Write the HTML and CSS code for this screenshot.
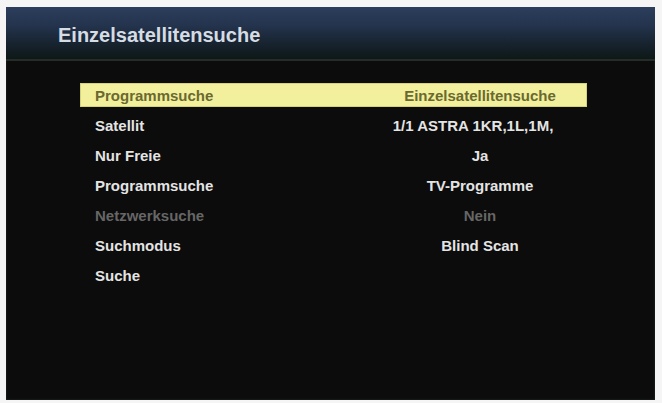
FILE: index.html
```html
<!DOCTYPE html>
<html lang="de">
<head>
<meta charset="utf-8">
<title>Einzelsatellitensuche</title>
<link rel="stylesheet" href="styles.css">
</head>
<body>
<div class="screen">
  <div class="header">
    <h1 class="title">Einzelsatellitensuche</h1>
  </div>
  <div class="menu">
    <div class="row selected"><span class="label">Programmsuche</span><span class="value">Einzelsatellitensuche</span></div>
    <div class="row"><span class="label">Satellit</span><span class="value shift">1/1 ASTRA 1KR,1L,1M,</span></div>
    <div class="row"><span class="label">Nur Freie</span><span class="value">Ja</span></div>
    <div class="row"><span class="label">Programmsuche</span><span class="value">TV-Programme</span></div>
    <div class="row disabled"><span class="label">Netzwerksuche</span><span class="value">Nein</span></div>
    <div class="row"><span class="label">Suchmodus</span><span class="value">Blind Scan</span></div>
    <div class="row"><span class="label">Suche</span><span class="value"></span></div>
  </div>
</div>
</body>
</html>
```

FILE: styles.css
```css
html, body {
  margin: 0;
  padding: 0;
  background: #f5f5f5;
}
body {
  width: 662px;
  height: 403px;
  overflow: hidden;
  font-family: "Liberation Sans", Arial, sans-serif;
}
.screen {
  margin: 7px 7px 0 6px;
  height: 393px;
  background: #0c0c0c;
  box-shadow: inset 0 0 2px #2a3a34;
}
.header {
  height: 52px;
  background: linear-gradient(to bottom, #2c3e5c 0%, #24344e 35%, #17232f 70%, #0e1817 100%);
  border-bottom: 2px solid #222e27;
  display: flex;
  align-items: center;
  padding-left: 52px;
}
.title {
  margin: 0;
  padding-top: 4px;
  font-size: 20px;
  font-weight: bold;
  color: #d6dce3;
}
.menu {
  margin: 22px 0 0 74px;
  width: 507px;
  display: flex;
  flex-direction: column;
  gap: 6px;
}
.row {
  height: 24px;
  display: grid;
  grid-template-columns: 290px 190px;
  align-items: center;
  padding-left: 15px;
  box-sizing: border-box;
  font-size: 15px;
  font-weight: bold;
  color: #e4e4e4;
}
.value {
  text-align: center;
}
.shift {
  padding-right: 14px;
}
.selected {
  background: #f2f09c;
  box-shadow: inset 0 0 0 1px #d6d27a;
  color: #6a6930;
}
.disabled {
  color: #666666;
}
```
